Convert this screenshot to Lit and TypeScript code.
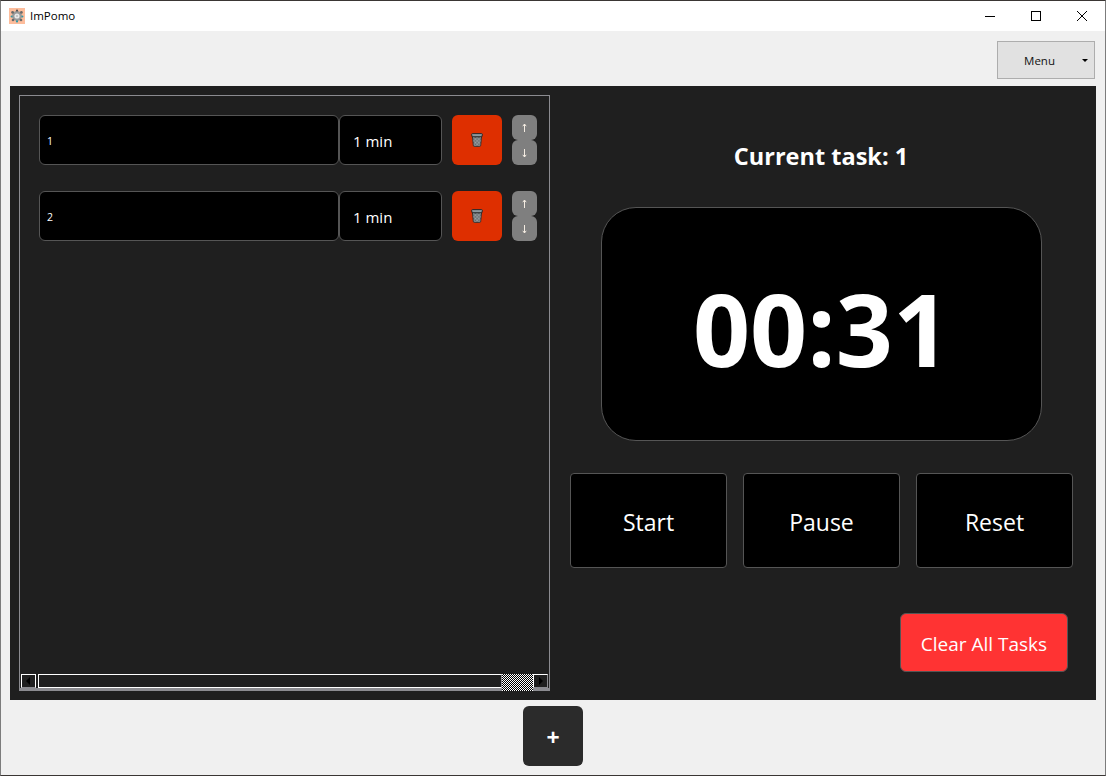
import { LitElement, html, css, svg } from "lit";
import { customElement } from "lit/decorators.js";

const trash = svg`<svg class="trash" viewBox="0 0 12 14" width="12" height="14">
  <defs>
    <pattern id="mesh" width="1.4" height="1.4" patternUnits="userSpaceOnUse">
      <rect width="1.4" height="1.4" fill="#a2a8ab"/>
      <rect width=".7" height=".7" fill="#5d6366"/>
      <rect x=".7" y=".7" width=".7" height=".7" fill="#5d6366"/>
    </pattern>
  </defs>
  <path d="M1.4 3.6 L2.3 12.4 Q2.5 13.4 3.4 13.4 H8.6 Q9.5 13.4 9.7 12.4 L10.6 3.6 Z" fill="url(#mesh)" stroke="#26282a" stroke-width=".8"/>
  <path d="M.6 1.6 Q.6 .6 1.6 .6 H10.4 Q11.4 .6 11.4 1.6 L10.8 3.8 H1.2 Z" fill="#8b989e" stroke="#1e1e1e" stroke-width=".9"/>
</svg>`;

@customElement("app-root")
export class AppRoot extends LitElement {
  static styles = css`
    :host {
      display: block;
      width: 1106px;
      height: 776px;
      font-family: "Open Sans", "Noto Sans", sans-serif;
      overflow: hidden;
    }
    * { box-sizing: border-box; }
    .window {
      width: 100%;
      height: 100%;
      display: flex;
      flex-direction: column;
      background: #f0f0f0;
      border: 1px solid #7c7c7c;
      border-top-color: #3a3634;
      border-bottom-color: #3a3634;
    }
    .titlebar {
      height: 30px;
      flex: none;
      background: #fff;
      display: flex;
      align-items: center;
      padding-left: 8px;
      color: #000;
      font-size: 11.5px;
    }
    .appicon { margin-right: 5px; flex: none; }
    .title { flex: 1; padding-bottom: 1px; }
    .winbtn {
      width: 46px;
      height: 30px;
      display: flex;
      align-items: center;
      justify-content: center;
    }
    .toolbar {
      height: 55px;
      flex: none;
      display: flex;
      justify-content: flex-end;
      align-items: flex-start;
      padding: 10px 10px 0 0;
    }
    .menu {
      position: relative;
      width: 98px;
      height: 38px;
      background: #e1e1e1;
      border: 1px solid #adadad;
      display: flex;
      align-items: center;
      justify-content: center;
      color: #111;
      font-size: 11.5px;
      padding-right: 13px;
    }
    .caret {
      position: absolute;
      right: 6px;
      top: 17px;
      width: 0;
      height: 0;
      border-left: 3px solid transparent;
      border-right: 3px solid transparent;
      border-top: 3px solid #000;
    }
    .main {
      margin: 0 9px;
      height: 614px;
      flex: none;
      background: #1f1f1f;
      display: flex;
      padding: 9px 0 9px 9px;
    }
    .list {
      width: 531px;
      height: 596px;
      flex: none;
      border: 1px solid #8b8b90;
      border-bottom: 0;
      display: flex;
      flex-direction: column;
    }
    .rows {
      flex: 1;
      padding: 19px 12px 0 19px;
      display: flex;
      flex-direction: column;
      gap: 26px;
    }
    .row { display: flex; height: 50px; }
    .name {
      width: 300px;
      background: #000;
      border: 1px solid #555;
      border-radius: 6px;
      color: #fff;
      font-size: 10.5px;
      padding: 2px 0 0 7px;
      display: flex;
      align-items: center;
    }
    .dur {
      width: 103px;
      background: #000;
      border: 1px solid #555;
      border-radius: 6px;
      color: #fff;
      font-size: 15px;
      padding: 2px 0 0 13px;
      display: flex;
      align-items: center;
    }
    .del {
      width: 50px;
      margin-left: 10px;
      background: #de2f00;
      border-radius: 6px;
      display: flex;
      align-items: center;
      justify-content: center;
      padding-bottom: 1px;
    }
    .arrows {
      width: 25px;
      margin-left: 10px;
      display: flex;
      flex-direction: column;
    }
    .arrow {
      height: 25px;
      background: #7f7f7f;
      border-radius: 6px;
      color: #f4f0ea;
      display: flex;
      align-items: center;
      justify-content: center;
    }
    .hscroll {
      height: 17px;
      flex: none;
      display: flex;
      border-bottom: 3px solid #8b8b90;
      padding-left: 1px;
      position: relative;
    }
    .sbtn {
      width: 15px;
      height: 14px;
      flex: none;
      border: 1px solid #fff;
      border-right-color: #8b8b90;
      border-bottom-color: #8b8b90;
      background: #1f1f1f;
      display: flex;
      align-items: center;
      justify-content: center;
    }
    .sbtn.left { margin-right: 2px; border-right-color: #fff; width: 15px; }
    .thumb {
      width: 464px;
      height: 14px;
      flex: none;
      border: 1px solid #fff;
      border-right-color: #8b8b90;
      background: #1f1f1f;
    }
    .track {
      width: 31px;
      height: 17px;
      flex: none;
      background-color: #fff;
      background-image:
        linear-gradient(45deg, #000 25%, transparent 25%, transparent 75%, #000 75%),
        linear-gradient(45deg, #000 25%, transparent 25%, transparent 75%, #000 75%);
      background-size: 2px 2px;
      background-position: 0 0, 1px 1px;
    }
    .panel {
      flex: 1;
      display: flex;
      flex-direction: column;
      padding-left: 20px;
      padding-right: 23px;
      min-width: 0;
    }
    .current {
      margin-top: 41px;
      height: 40px;
      padding-right: 1px;
      display: flex;
      align-items: center;
      justify-content: center;
      color: #fff;
      font-weight: 700;
      font-size: 23.5px;
      white-space: nowrap;
    }
    .timer {
      margin: 31px 0 0 31px;
      width: 441px;
      height: 234px;
      background: #000;
      border: 1px solid #555;
      border-radius: 35px;
      color: #fff;
      font-weight: 700;
      font-size: 100px;
      padding-top: 8px;
      display: flex;
      align-items: center;
      justify-content: center;
    }
    .controls {
      margin-top: 32px;
      display: flex;
      gap: 16px;
    }
    .ctl {
      width: 157px;
      height: 95px;
      background: #000;
      border: 1px solid #555;
      border-radius: 4px;
      color: #fff;
      font-size: 23px;
      padding-top: 2px;
      display: flex;
      align-items: center;
      justify-content: center;
    }
    .clearrow {
      margin-top: 45px;
      display: flex;
      justify-content: flex-end;
      padding-right: 5px;
    }
    .clear {
      width: 168px;
      height: 59px;
      background: #ff3333;
      border: 1px solid #555;
      border-radius: 6px;
      color: #fff;
      font-size: 19px;
      padding-top: 2px;
      display: flex;
      align-items: center;
      justify-content: center;
    }
    .bottom {
      flex: 1;
      display: flex;
      justify-content: center;
      padding-top: 6px;
    }
    .add {
      width: 60px;
      height: 60px;
      background: #2b2b2b;
      border-radius: 6px;
      color: #fff;
      font-weight: 700;
      font-size: 23px;
      padding-top: 2px;
      display: flex;
      align-items: center;
      justify-content: center;
    }
  `;

  private row(name: string) {
    return html`<div class="row">
      <div class="name">${name}</div>
      <div class="dur">1 min</div>
      <div class="del">${trash}</div>
      <div class="arrows">
        <div class="arrow">
          <svg width="7" height="10" viewBox="0 0 7 10"><path d="M3.5 1 V9 M1.8 3.2 L3.5 1 L5.2 3.2" stroke="#f4ece2" stroke-width="1" fill="none"/></svg>
        </div>
        <div class="arrow">
          <svg width="7" height="10" viewBox="0 0 7 10"><path d="M3.5 1 V9 M1.8 6.8 L3.5 9 L5.2 6.8" stroke="#f4ece2" stroke-width="1" fill="none"/></svg>
        </div>
      </div>
    </div>`;
  }

  render() {
    return html`<div class="window">
      <div class="titlebar">
        <svg class="appicon" width="16" height="16" viewBox="0 0 16 16">
          <rect width="16" height="16" fill="#fdbd9c"/>
          <circle cx="8" cy="8" r="5" fill="#9a9a9a"/>
          <circle cx="8" cy="8" r="2.6" fill="#e8e8e8"/>
          <circle cx="8" cy="8" r="1" fill="#bdbdbd"/>
          <circle cx="3.6" cy="4.4" r="1.4" fill="#6a6a6a"/>
          <circle cx="12.4" cy="4.4" r="1.4" fill="#6a6a6a"/>
          <circle cx="2.6" cy="8.4" r="1" fill="#2f97a5"/>
          <circle cx="13.4" cy="8.4" r="1" fill="#2f97a5"/>
          <circle cx="4" cy="12" r="1.3" fill="#6a6a6a"/>
          <circle cx="12" cy="12" r="1.3" fill="#6a6a6a"/>
          <circle cx="8" cy="13.4" r="1.1" fill="#2f97a5"/>
          <circle cx="8" cy="2.6" r="1.1" fill="#555"/>
        </svg>
        <span class="title">ImPomo</span>
        <div class="winbtn"><svg width="10" height="10" viewBox="0 0 10 10"><path d="M0 5.5 H10" stroke="#000" fill="none"/></svg></div>
        <div class="winbtn"><svg width="10" height="10" viewBox="0 0 10 10"><rect x=".5" y=".5" width="9" height="9" stroke="#000" fill="none"/></svg></div>
        <div class="winbtn"><svg width="10" height="10" viewBox="0 0 10 10"><path d="M0 0 L10 10 M10 0 L0 10" stroke="#000" stroke-width="1" fill="none"/></svg></div>
      </div>
      <div class="toolbar">
        <div class="menu">Menu<span class="caret"></span></div>
      </div>
      <div class="main">
        <div class="list">
          <div class="rows">${this.row("1")}${this.row("2")}</div>
          <div class="hscroll">
            <div class="sbtn left"><svg width="5" height="8" viewBox="0 0 5 8"><path d="M4 0 V8 L0 4 Z" fill="#000"/></svg></div>
            <div class="thumb"></div>
            <div class="track"></div>
            <div class="sbtn right"><svg width="5" height="8" viewBox="0 0 5 8"><path d="M1 0 V8 L5 4 Z" fill="#000"/></svg></div>
          </div>
        </div>
        <div class="panel">
          <div class="current">Current task: 1</div>
          <div class="timer">00:31</div>
          <div class="controls">
            <div class="ctl">Start</div>
            <div class="ctl">Pause</div>
            <div class="ctl">Reset</div>
          </div>
          <div class="clearrow"><div class="clear">Clear All Tasks</div></div>
        </div>
      </div>
      <div class="bottom"><div class="add">+</div></div>
    </div>`;
  }
}
